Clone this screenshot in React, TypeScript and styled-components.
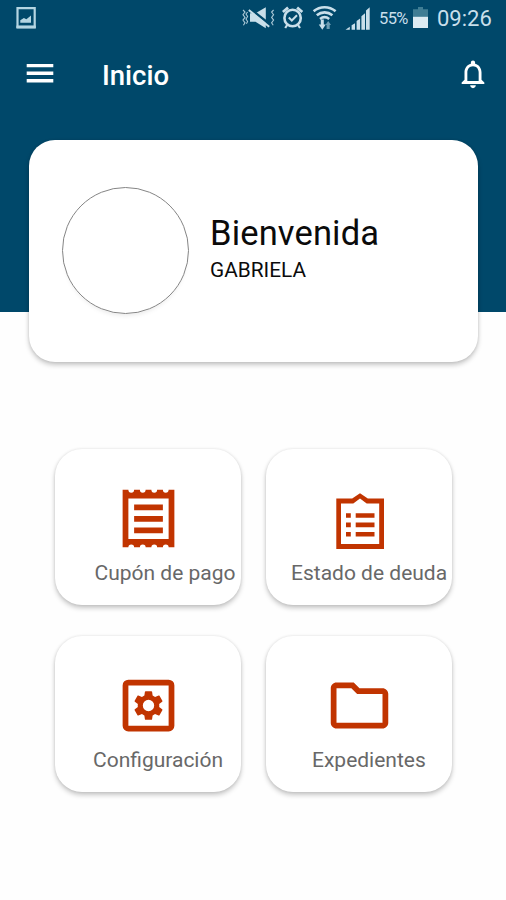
import React from "react";
import styled, { createGlobalStyle } from "styled-components";

const NAVY = "#00486a";
const RUST = "#c13400";
const STATUS = "#c9dfea";

const GlobalStyle = createGlobalStyle`
  * { box-sizing: border-box; }
  body { margin: 0; background: #fefefe; font-family: Roboto, "Liberation Sans", sans-serif; }
  svg { display: block; flex: none; }
`;

const Screen = styled.main`
  width: 506px;
  height: 900px;
  overflow: hidden;
  background: #fefefe;
`;

const Header = styled.header`
  height: 312px;
  background: ${NAVY};
`;

const StatusBar = styled.div`
  display: flex;
  align-items: center;
  justify-content: space-between;
  height: 36px;
  padding: 0 14px 0 15px;
  color: ${STATUS};
`;

const StatusGroup = styled.div`
  display: flex;
  align-items: center;
`;

const Gap = styled.span<{ $w: number }>`
  width: ${(p) => p.$w}px;
`;

const StatusText = styled.span<{ $size: number; $width: number; $left: number; $spacing: number }>`
  width: ${(p) => p.$width}px;
  margin-left: ${(p) => p.$left}px;
  padding-top: 2px;
  font-size: ${(p) => p.$size}px;
  letter-spacing: ${(p) => p.$spacing}px;
  line-height: 36px;
  white-space: nowrap;
`;

const AppBar = styled.div`
  display: flex;
  align-items: center;
  height: 76px;
  padding: 0 16px 0 26px;
`;

const IconButton = styled.button`
  padding: 0;
  border: 0;
  background: none;
  color: #fff;
`;

const Title = styled.h1`
  flex: 1;
  margin: 3px 0 0 48px;
  color: #fff;
  font-size: 27.5px;
  font-weight: 500;
  line-height: 32px;
`;

const WelcomeCard = styled.section`
  display: flex;
  align-items: center;
  width: 449px;
  height: 222px;
  margin: -172.5px 0 0 28.5px;
  padding-left: 33.5px;
  border-radius: 26px;
  background: #fff;
  position: relative;
  box-shadow: 0 3px 5px rgba(0, 0, 0, 0.22), 0 0 3px rgba(0, 0, 0, 0.1);
`;

const Avatar = styled.div`
  width: 127px;
  height: 127px;
  border: 1px solid #858585;
  border-radius: 50%;
  box-shadow: 0 4px 5px -3px rgba(0, 0, 0, 0.1);
`;

const Greeting = styled.div`
  margin: -7px 0 0 21px;
  color: #0b0b0b;
`;

const Hello = styled.div`
  font-size: 34.5px;
  line-height: 42px;
  letter-spacing: 0.15px;
`;

const UserName = styled.div`
  margin-top: 3px;
  font-size: 20.8px;
  line-height: 26px;
`;

const TileGrid = styled.nav`
  display: grid;
  grid-template-columns: 186px 186px;
  grid-auto-rows: 156px;
  gap: 31px 25px;
  margin: 87.5px 0 0 55px;
`;

const TileCard = styled.a`
  display: flex;
  flex-direction: column;
  align-items: center;
  padding-top: 34.7px;
  border-radius: 27px;
  background: #fff;
  color: ${RUST};
  box-shadow: 0 3px 5px rgba(0, 0, 0, 0.22), 0 0 3px rgba(0, 0, 0, 0.1);
`;

const TileLabel = styled.span<{ $indent: number }>`
  align-self: flex-start;
  margin: 7.3px 0 0 ${(p) => p.$indent}px;
  color: #686868;
  font-size: 21px;
  line-height: 26px;
  white-space: nowrap;
`;

const ScreenshotIcon = () => (
  <svg width="21" height="24" viewBox="15 6 21 24">
    <path d="M17.5 8.2h17.2v18.6H17.5z" fill="none" stroke="#b4d5e2" strokeWidth="2.2" />
    <path d="M16.4 25.6h19.4v3H16.4z" fill="#b4d5e2" />
    <path d="M20.3 22.8v-2.6l3.6-2.2 2.5 1.2 4.6-3.6v7.2z" fill="#b4d5e2" />
  </svg>
);

const MuteIcon = () => (
  <svg width="34" height="24" viewBox="242 6 34 24">
    <g fill="none" stroke={STATUS} strokeWidth="1.1" opacity="0.85">
      <path d="M243 10l2 2-2 2.7 2 2.7-2 2.7 2 2.7-1.6 2.4M247.6 12l-1.6 2 1.6 2.5-1.6 2.5 1.6 2.5-1.2 2.2" />
      <path d="M273.6 10l-2 2 2 2.7-2 2.7 2 2.7-2 2.7 1.6 2.4" />
    </g>
    <path d="M250 13.2h5.5l10.3-6v21l-10.3-6.4H250z" fill={STATUS} />
    <path d="M250.5 9l19.5 15.6" stroke={NAVY} strokeWidth="2.6" />
    <path d="M248.8 10l20.4 16.7" stroke={STATUS} strokeWidth="2" />
  </svg>
);

const AlarmIcon = () => (
  <svg width="22" height="24" viewBox="282 6 22 24">
    <g fill="none" stroke={STATUS}>
      <circle cx="292.6" cy="18" r="8.2" strokeWidth="2.6" />
      <path d="M288.8 17.5l3 3 5.2-5.2" strokeWidth="2" />
      <path d="M282.9 12l5.2-4.4M302.3 12l-5.2-4.4" strokeWidth="2.8" />
      <path d="M287.2 25l-2 3M298 25l2 3" strokeWidth="2.2" />
    </g>
  </svg>
);

const WifiIcon = () => (
  <svg width="25" height="26" viewBox="312 5 25 26">
    <g fill="none" stroke={STATUS} strokeWidth="2.6">
      <path d="M313.6 11.3c6.5-5.4 15.5-5.4 22 0" />
      <path d="M316.8 15.2c4.7-3.8 10.9-3.8 15.6 0" />
      <path d="M320 19c2.8-2.2 6.4-2.2 9.2 0" />
    </g>
    <path d="M320.8 19.5h3v5h2l-3.5 5.3-3.5-5.3h2z" fill={STATUS} />
    <path d="M326.6 29v-4h-1.2l2.8-4 2.8 4h-1.3v4z" fill="#6d9db3" />
  </svg>
);

const SignalIcon = () => (
  <svg width="25" height="25" viewBox="345 6 25 25">
    <path
      d="M345.5 29.8l4.3-3v3zM351.6 25.2l3.4-2v6.6h-3.4zM356.6 21l3.5-2.6v11.4h-3.5zM361.4 16.2l3.6-3v16.6h-3.6zM366 10.4l3.7-3.2v22.6H366z"
      fill={STATUS}
    />
  </svg>
);

const BatteryIcon = () => (
  <svg width="15" height="22" viewBox="413 7 15 22">
    <path d="M418 7h5v2.2h5v8h-15v-8h5z" fill="#3f7d94" />
    <path d="M413 16.8h15V28h-15z" fill="#dcebf2" />
  </svg>
);

const MenuIcon = () => (
  <svg width="28" height="24" viewBox="0 0 28 24" fill="currentColor">
    <path d="M.7 1.9h26.6v3.4H.7zM.7 9.5h26.6v3.4H.7zM.7 17.1h26.6v3.4H.7z" />
  </svg>
);

const BellIcon = () => (
  <svg width="34" height="34" viewBox="0 0 24 24" fill="currentColor">
    <path d="M12 22c1.1 0 2-.9 2-2h-4c0 1.1.9 2 2 2zm6-6v-5c0-3.07-1.63-5.64-4.5-6.32V4c0-.83-.67-1.5-1.5-1.5s-1.5.67-1.5 1.5v.68C7.64 5.36 6 7.92 6 11v5l-2 2v1h16v-1l-2-2zm-2 1H8v-6c0-2.48 1.51-4.5 4-4.5s4 2.02 4 4.5v6z" />
  </svg>
);

const TileSvg = styled.svg.attrs({ width: 69, height: 69, fill: "currentColor" })``;

const ReceiptIcon = () => (
  <TileSvg viewBox="0 0 24 24">
    <path
      fillRule="evenodd"
      d="M3 2h2a1 1 0 0 0 2 0h2a1 1 0 0 0 2 0h2a1 1 0 0 0 2 0h2a1 1 0 0 0 2 0h2v20h-2a1 1 0 0 0-2 0h-2a1 1 0 0 0-2 0h-2a1 1 0 0 0-2 0H7a1 1 0 0 0-2 0H3zM5 5v14.1h14V5zM7 7.15h10v2H7zM7 11.15h10v2H7zM7 15.15h10v2H7z"
    />
  </TileSvg>
);

const ClipboardIcon = () => (
  <TileSvg viewBox="0 0 69 69">
    <path
      fillRule="evenodd"
      d="M11.3 14.4h15.9l7.8-5.2 7.8 5.2H59V65H11.3zM16 19.4v40.7h38.2V19.4H41.7L35 14.5l-6.7 4.9zM21 29.2h4.8v4.6H21zM30.7 29.2h18.8v4.6H30.7zM21 38.6h4.8v4.6H21zM30.7 38.6h18.8v4.6H30.7zM21 48h4.8v4.6H21zM30.7 48h18.8v4.6H30.7z"
    />
  </TileSvg>
);

const SettingsIcon = () => (
  <TileSvg viewBox="0 0 24 24">
    <path
      fillRule="evenodd"
      d="M5 3h14a2 2 0 0 1 2 2v14a2 2 0 0 1-2 2H5a2 2 0 0 1-2-2V5a2 2 0 0 1 2-2zm0 2v14h14V5z"
    />
    <path
      transform="translate(5.76 5.76) scale(.52)"
      d="M19.14 12.94c.04-.3.06-.61.06-.94 0-.32-.02-.64-.07-.94l2.03-1.58c.18-.14.23-.41.12-.61l-1.92-3.32c-.12-.22-.37-.29-.59-.22l-2.39.96c-.5-.38-1.03-.7-1.62-.94l-.36-2.54c-.04-.24-.24-.41-.48-.41h-3.84c-.24 0-.43.17-.47.41l-.36 2.54c-.59.24-1.13.57-1.62.94l-2.39-.96c-.22-.08-.47 0-.59.22L2.74 8.87c-.12.21-.08.47.12.61l2.03 1.58c-.05.3-.09.63-.09.94s.02.64.07.94l-2.03 1.58c-.18.14-.23.41-.12.61l1.92 3.32c.12.22.37.29.59.22l2.39-.96c.5.38 1.03.7 1.62.94l.36 2.54c.05.24.24.41.48.41h3.84c.24 0 .44-.17.47-.41l.36-2.54c.59-.24 1.13-.56 1.62-.94l2.39.96c.22.08.47 0 .59-.22l1.92-3.32c.12-.22.07-.47-.12-.61l-2.01-1.58zM12 15.8a3.8 3.8 0 1 1 0-7.6 3.8 3.8 0 0 1 0 7.6z"
    />
  </TileSvg>
);

const FolderIcon = () => (
  <TileSvg viewBox="0 0 24 24">
    <path d="M9.17 6l2 2H20v10H4V6h5.17M10 4H4c-1.1 0-1.99.9-1.99 2L2 18c0 1.1.9 2 2 2h16c1.1 0 2-.9 2-2V8c0-1.1-.9-2-2-2h-8l-2-2z" />
  </TileSvg>
);

const tiles = [
  { label: "Cupón de pago", Icon: ReceiptIcon, indent: 39.5 },
  { label: "Estado de deuda", Icon: ClipboardIcon, indent: 25 },
  { label: "Configuración", Icon: SettingsIcon, indent: 38 },
  { label: "Expedientes", Icon: FolderIcon, indent: 46 },
];

export default function App() {
  return (
    <>
      <GlobalStyle />
      <Screen>
        <Header>
          <StatusBar>
            <ScreenshotIcon />
            <StatusGroup>
              <MuteIcon />
              <Gap $w={6} />
              <AlarmIcon />
              <Gap $w={8} />
              <WifiIcon />
              <Gap $w={8} />
              <SignalIcon />
              <StatusText $size={16.5} $width={34} $left={9} $spacing={-0.6}>55%</StatusText>
              <BatteryIcon />
              <StatusText $size={22} $width={55} $left={9} $spacing={0}>09:26</StatusText>
            </StatusGroup>
          </StatusBar>
          <AppBar>
            <IconButton aria-label="Menú"><MenuIcon /></IconButton>
            <Title>Inicio</Title>
            <IconButton aria-label="Notificaciones"><BellIcon /></IconButton>
          </AppBar>
        </Header>
        <WelcomeCard>
          <Avatar />
          <Greeting>
            <Hello>Bienvenida</Hello>
            <UserName>GABRIELA</UserName>
          </Greeting>
        </WelcomeCard>
        <TileGrid>
          {tiles.map(({ label, Icon, indent }) => (
            <TileCard key={label}>
              <Icon />
              <TileLabel $indent={indent}>{label}</TileLabel>
            </TileCard>
          ))}
        </TileGrid>
      </Screen>
    </>
  );
}
